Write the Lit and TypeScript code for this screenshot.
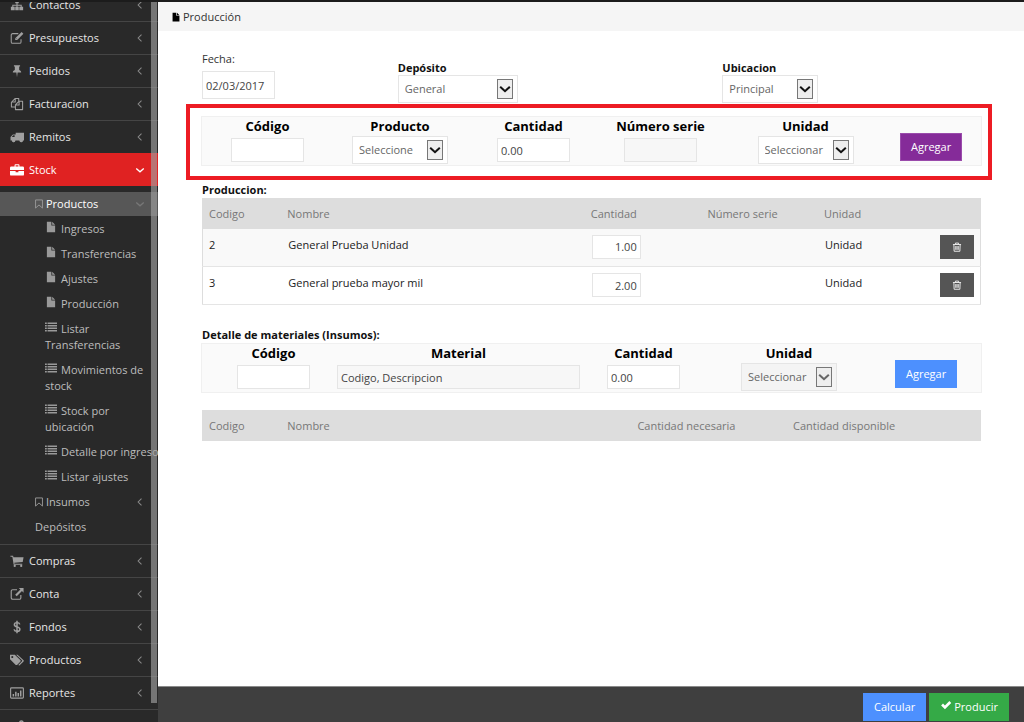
import { LitElement, html, css, svg } from "lit";
import { customElement, property } from "lit/decorators.js";

const icons: Record<string, unknown> = {
  sitemap: svg`<path d="M6 2h4v4H8.6v1.6H13.4V10H15v4h-4.4v-4h1.6V8.8H8.6V10H10v4H6v-4h1.4V8.8H3.8V10H5.4v4H1v-4h1.6V7.6h4.8V6H6z" fill="currentColor"/>`,
  edit: svg`<path d="M12.6 9.5v3a1.6 1.6 0 0 1-1.6 1.6H3a1.6 1.6 0 0 1-1.6-1.6V4.6A1.6 1.6 0 0 1 3 3h6.5" fill="none" stroke="currentColor" stroke-width="1.2"/><path d="M13.3 1.2l2 2-7 7H6V8.200z" fill="currentColor"/><path d="M7.2 8.5l.9.9" stroke="#292929" stroke-width=".8"/>`,
  pin: svg`<path d="M4.500 1.500h7v1.400h-1v4c1.500.6 2.300 1.600 2.300 2.900H8.700L8 15l-.7-5.200H3.200c0-1.300.8-2.300 2.300-2.900v-4h-1z" fill="currentColor"/>`,
  copy: svg`<path d="M6 4.500V1.600h4v3.200M6 1.600L1.600 6v5.400h4.200M1.600 5.800H6V2M10.400 4.800h4v9.600H6.200V9l4.200-4.200v4.400H6.400" fill="none" stroke="currentColor" stroke-width="1.200" stroke-linejoin="round"/>`,
  truck: svg`<path d="M6.500 3H16v9h-1.200a2 2 0 0 1-4 0H6.200a2 2 0 0 1-4 0H.6V8l2.700-3h3.200z" fill="currentColor"/><path d="M2 8l1.800-2h1.500v2z" fill="#292929"/><circle cx="4.200" cy="12.200" r="1.700" fill="currentColor"/><circle cx="12.800" cy="12.200" r="1.700" fill="currentColor"/>`,
  briefcase: svg`<path d="M5.200 4V2.500q0-1 1-1h3.600q1 0 1 1V4h3.700q1.500 0 1.500 1.500V8H0V5.500Q0 4 1.500 4zM6.400 4h3.200V2.700H6.400zM0 9h6.400v1.600h3.200V9H16v4q0 1.400-1.500 1.400h-13Q0 14.400 0 13z" fill="currentColor"/>`,
  cart: svg`<path d="M.5 2h3l.5 1.600h11.500l-1 5.500-9.600 1 .2 1H14v1.200H4.200L2.700 3.200H.5z" fill="currentColor"/><circle cx="5.400" cy="13.600" r="1.300" fill="currentColor"/><circle cx="12.800" cy="13.600" r="1.300" fill="currentColor"/>`,
  external: svg`<path d="M12.400 9v3.400a1.600 1.600 0 0 1-1.600 1.600H3a1.600 1.600 0 0 1-1.600-1.600V4.800A1.600 1.600 0 0 1 3 3.200h5" fill="none" stroke="currentColor" stroke-width="1.300"/><path d="M10 1h5.500v5.500l-1.800-1.800-6 6-1.800-1.800 6-6z" fill="currentColor"/>`,
  dollar: svg`<path d="M11.200 5C10.800 3.600 9.600 3 8 3 6.200 3 5 4 5 5.300 5 8.700 11.300 7 11.300 10.500 11.300 12 10 13 8 13c-1.800 0-3-.8-3.400-2.300M8 .8V15.200" fill="none" stroke="currentColor" stroke-width="1.700"/>`,
  tags: svg`<path d="M0 2h5.500l6.500 6.200q.6.700 0 1.400l-4 4q-.7.500-1.400 0L0 7.200zM2.600 3.300a1.200 1.200 0 1 0 .01 0z" fill="currentColor" fill-rule="evenodd"/><path d="M7 2h1.700l6.800 6.300q.6.600 0 1.300L11 14q-.8.500-1.500-.2l4.200-4.300q.5-.6 0-1.200z" fill="currentColor"/>`,
  chart: svg`<rect x=".7" y="2.200" width="14.600" height="11.600" rx="1" fill="none" stroke="currentColor" stroke-width="1.300"/><path d="M3 9h1.700v3H3zM5.800 6.500h1.700V12H5.800zM8.600 8h1.700v4H8.600zM11.400 5h1.700v7h-1.700z" fill="currentColor"/>`,
  cogs: svg`<circle cx="6" cy="9" r="3.600" fill="none" stroke="currentColor" stroke-width="2.800" stroke-dasharray="2.100 .7"/><circle cx="13" cy="4" r="1.800" fill="none" stroke="currentColor" stroke-width="1.800"/><circle cx="13" cy="13" r="1.800" fill="none" stroke="currentColor" stroke-width="1.800"/>`,
  file: svg`<path d="M2.500 1h6v5h5v9h-11zM9.600 1l3.900 4H9.600z" fill="currentColor"/>`,
  list: svg`<path d="M0 2h2.400v2H0zM3.400 2H16v2H3.400zM0 5.300h2.400v2H0zM3.400 5.300H16v2H3.400zM0 8.600h2.400v2H0zM3.400 8.600H16v2H3.400zM0 11.900h2.400v2H0zM3.400 11.900H16v2H3.400z" fill="currentColor"/>`,
  bookmark: svg`<path d="M2.500 1.500h11V14.500L8 9.500l-5.500 5z" fill="none" stroke="currentColor" stroke-width="1.500"/>`,
  left: svg`<path d="M10 3.500L5.500 8l4.500 4.500" fill="none" stroke="currentColor" stroke-width="1.400"/>`,
  down: svg`<path d="M3 6l5 4.500L13 6" fill="none" stroke="currentColor" stroke-width="1.800"/>`,
  arrow: svg`<path d="M2.500 5.500L8 10.500l5.500-5" fill="none" stroke="currentColor" stroke-width="2.400"/>`,
  trash: svg`<path d="M1.500 4h13M5.500 4V1.700h5V4M3 4.500l.4 10.300h9.200L13 4.500M6 6.500v6M8 6.500v6M10 6.500v6" fill="none" stroke="currentColor" stroke-width="1.500"/>`,
  check: svg`<path d="M1.500 8.500L4 6l2.600 2.600L12.500 2.800 15 5.300l-8.400 8.300z" fill="currentColor"/>`,
};

@customElement("ui-icon")
class UiIcon extends LitElement {
  @property() name = "";
  static styles = css`
    :host { display: inline-block; width: 14px; height: 14px; flex: none; }
    svg { display: block; width: 100%; height: 100%; }
  `;
  render() {
    return html`<svg viewBox="0 0 16 16" aria-hidden="true">${icons[this.name]}</svg>`;
  }
}

interface Item { icon: string; text: string; }

const before: Item[] = [
  { icon: "sitemap", text: "Contactos" },
  { icon: "edit", text: "Presupuestos" },
  { icon: "pin", text: "Pedidos" },
  { icon: "copy", text: "Facturacion" },
  { icon: "truck", text: "Remitos" },
];
const after: Item[] = [
  { icon: "cart", text: "Compras" },
  { icon: "external", text: "Conta" },
  { icon: "dollar", text: "Fondos" },
  { icon: "tags", text: "Productos" },
  { icon: "chart", text: "Reportes" },
  { icon: "cogs", text: "Configuracion" },
];
const leaves: { icon: string; lines: string[] }[] = [
  { icon: "file", lines: ["Ingresos"] },
  { icon: "file", lines: ["Transferencias"] },
  { icon: "file", lines: ["Ajustes"] },
  { icon: "file", lines: ["Producción"] },
  { icon: "list", lines: ["Listar", "Transferencias"] },
  { icon: "list", lines: ["Movimientos de", "stock"] },
  { icon: "list", lines: ["Stock por", "ubicación"] },
  { icon: "list", lines: ["Detalle por ingreso"] },
  { icon: "list", lines: ["Listar ajustes"] },
];

@customElement("side-menu")
class SideMenu extends LitElement {
  static styles = css`
    :host { display: block; position: relative; overflow: hidden; background: #292929; }
    ul { list-style: none; margin: 0; padding: 0; }
    .menu { margin-top: -14px; }
    a { color: inherit; text-decoration: none; }
    .top { display: flex; align-items: center; height: 32px; padding: 0 12px 0 10px; gap: 5px; border-top: 1px solid #454545; color: #e6e6e6; }
    .top ui-icon { color: #a0a0a0; }
    .label { flex: 1; }
    .top .chev, .mid .chev { width: 12px; height: 12px; color: #8a8a8a; }
    .open { background: #e02222; border-color: #e02222; color: #fff; }
    .open ui-icon, .open .chev { color: #fff; }
    .sub { padding: 6px 0 5px; color: #bdbdbd; line-height: 16px; }
    .mid { display: flex; align-items: center; height: 25px; padding: 0 12px 0 34px; gap: 2px; }
    .mid ui-icon { width: 10px; height: 12px; color: #999; }
    .mid.plain { padding-left: 35px; }
    .mid.active { height: 24px; background: #575757; color: #fff; }
    .mid.active .chev { color: #777; }
    .leaf { display: block; padding: 5px 0 4px 45px; white-space: nowrap; }
    .leaf ui-icon { width: 12px; height: 12px; margin-right: 4px; color: #999; }
    .thumb { position: absolute; top: 0; right: 1px; width: 6px; height: calc(100% - 19px); background: rgba(161, 161, 161, 0.64); }
  `;
  private row(i: Item) {
    return html`<li><a class="top" href="#"><ui-icon name=${i.icon}></ui-icon><span class="label">${i.text}</span><ui-icon class="chev" name="left"></ui-icon></a></li>`;
  }
  render() {
    return html`
      <nav>
        <ul class="menu">
          ${before.map((i) => this.row(i))}
          <li>
            <a class="top open" href="#"><ui-icon name="briefcase"></ui-icon><span class="label">Stock</span><ui-icon class="chev" name="down"></ui-icon></a>
            <ul class="sub">
              <li>
                <a class="mid active" href="#"><ui-icon name="bookmark"></ui-icon><span class="label">Productos</span><ui-icon class="chev" name="down"></ui-icon></a>
                <ul>
                  ${leaves.map((l) => html`<li><a class="leaf" href="#"><ui-icon name=${l.icon}></ui-icon>${l.lines.map((t, n) => (n ? html`<br />${t}` : t))}</a></li>`)}
                </ul>
              </li>
              <li><a class="mid" href="#"><ui-icon name="bookmark"></ui-icon><span class="label">Insumos</span><ui-icon class="chev" name="left"></ui-icon></a></li>
              <li><a class="mid plain" href="#">Depósitos</a></li>
            </ul>
          </li>
          ${after.map((i) => this.row(i))}
        </ul>
      </nav>
      <div class="thumb"></div>
    `;
  }
}

@customElement("app-root")
class AppRoot extends LitElement {
  static styles = css`
    :host { display: grid; grid-template: 2px minmax(0, 1fr) / 158px minmax(0, 1fr); height: 100vh; overflow: hidden; background: #fff; color: #333; font: 11px/16px "Open Sans", "Noto Sans", sans-serif; }
    * { box-sizing: border-box; }
    .strip { grid-column: 1 / -1; background: #1c1c1c; }
    .page { display: flex; flex-direction: column; min-width: 0; }
    .crumb { display: flex; align-items: center; gap: 2px; height: 29px; padding: 0 13px; background: #f5f5f5; }
    .crumb ui-icon { width: 10px; height: 10px; color: #000; }
    main { flex: 1; min-height: 0; padding: 20px 42px 0 43px; }
    label { display: block; }
    input, select, button { font: inherit; margin: 0; border-radius: 0; }
    input { width: 73px; height: 24px; padding: 0 3px; border: 1px solid #e5e5e5; background: #fff; color: #444; }
    input::placeholder { color: #444; opacity: 1; }
    input:disabled { background: #f7f7f7; }
    .pick { display: inline-block; position: relative; width: 96px; height: 28px; }
    .pick.wide { width: 120px; }
    select { display: block; appearance: none; width: 100%; height: 28px; padding: 0 24px 0 6px; border: 1px solid #e5e5e5; background: #fff; color: #666; opacity: 1; }
    select:disabled { background: #f4f4f4; }
    .pick ui-icon { position: absolute; top: 4px; right: 5px; width: 16px; height: 20px; border: 1px solid #777; background: #eee; color: #111; pointer-events: none; }
    .pick select:disabled + ui-icon { color: #666; }
    .heads { display: grid; grid-template-columns: 196fr 325fr 259fr; align-items: end; padding: 0 1px; height: 53px; }
    .heads > :not(.date) { padding-bottom: 1px; }
    .small { font-weight: 700; color: #111; line-height: 14px; }
    .date { align-self: start; }
    .date input { height: 28px; margin-top: 4px; }
    .mark { margin: 0 -10px 0 -15px; padding: 8px 6px 10px 11px; border: 4px solid #ed1c24; }
    .panel { display: grid; height: 50px; border: 1px solid #f0f0f0; background: #fafafa; text-align: center; }
    .add { grid-template-columns: 131fr 134fr 133fr 121fr 169fr 91fr; }
    .supply { grid-template-columns: 123fr 267fr 103fr 188fr 98fr; }
    .supply .first { padding-left: 20px; }
    .cell > label { color: #000; font-size: 13px; font-weight: 700; line-height: 19px; }
    .control { display: flex; align-items: center; justify-content: center; height: 28px; }
    .control .long { width: 91%; }
    .act { padding: 16px 0 0 10px; text-align: left; }
    .supply .act { padding-left: 12px; }
    .btn { height: 28px; padding: 0 10px; border: 1px solid #4d90fe; background: #4d90fe; color: #fff; }
    .purple { background: #852b99; border-color: #9a4bab; }
    .green { background: #35aa47; border-color: #35aa47; }
    .btn ui-icon { width: 12px; height: 12px; margin-right: 2px; }
    h2 { margin: 3px 1px 1px; line-height: 14px; font-size: 11px; font-weight: 700; color: #111; }
    .second { margin-top: 23px; }
    .tbl { padding: 0 1px; }
    table { width: 100%; border-collapse: collapse; table-layout: fixed; border: 1px solid #ddd; }
    th { height: 30px; padding: 0 7px; background: #ddd; color: #777; font-weight: 400; text-align: left; }
    td { height: 38px; padding: 6px 8px; border-bottom: 1px solid #e5e5e5; vertical-align: top; line-height: 20px; color: #222; }
    th:first-child, td:first-child { padding-left: 6px; }
    tbody tr:first-child { background: #f9f9f9; }
    td input { display: block; width: 49px; text-align: right; }
    .trash { display: flex; align-items: center; justify-content: center; width: 34px; height: 24px; margin-left: auto; padding: 0; border: 0; background: #555; color: #eee; }
    .trash ui-icon { width: 10px; height: 10px; }
    td.end { padding-right: 6px; }
    .c1 { width: 10%; } .c2 { width: 39%; } .c3 { width: 15%; } .c4 { width: 15%; }
    .m2 { width: 45%; } .m3 { width: 20%; }
    .needs { margin-top: 17px; }
    footer { display: flex; gap: 3px; justify-content: flex-end; height: 36px; padding: 6px 15px 0; background: #3f3f3f; border-top: 1px solid #8a8a8a; }
  `;
  private pick(id: string, text: string, wide = false, off = false) {
    return html`<span class="pick ${wide ? "wide" : ""}"><select id=${id} ?disabled=${off}><option>${text}</option></select><ui-icon name="arrow"></ui-icon></span>`;
  }
  private line(code: string, name: string, qty: string) {
    return html`<tr>
      <td>${code}</td><td>${name}</td>
      <td><input type="text" aria-label="Cantidad" .value=${qty} /></td>
      <td></td><td>Unidad</td>
      <td class="end"><button class="trash" type="button" aria-label="Eliminar"><ui-icon name="trash"></ui-icon></button></td>
    </tr>`;
  }
  render() {
    return html`
      <div class="strip"></div>
      <side-menu></side-menu>
      <div class="page">
        <header class="crumb"><ui-icon name="file"></ui-icon><span>Producción</span></header>
        <main>
          <div class="heads">
            <div class="date"><label for="fecha">Fecha:</label><input id="fecha" type="text" value="02/03/2017" /></div>
            <div><label class="small" for="deposito">Depósito</label>${this.pick("deposito", "General", true)}</div>
            <div><label class="small" for="ubicacion">Ubicacion</label>${this.pick("ubicacion", "Principal")}</div>
          </div>
          <div class="mark">
            <div class="panel add">
              <div class="cell"><label for="codigo">Código</label><div class="control"><input id="codigo" type="text" /></div></div>
              <div class="cell"><label for="producto">Producto</label><div class="control">${this.pick("producto", "Seleccione")}</div></div>
              <div class="cell"><label for="cantidad">Cantidad</label><div class="control"><input id="cantidad" type="text" value="0.00" /></div></div>
              <div class="cell"><label for="serie">Número serie</label><div class="control"><input id="serie" type="text" disabled /></div></div>
              <div class="cell"><label for="unidad">Unidad</label><div class="control">${this.pick("unidad", "Seleccionar")}</div></div>
              <div class="act"><button class="btn purple" type="button">Agregar</button></div>
            </div>
          </div>
          <h2>Produccion:</h2>
          <div class="tbl">
            <table>
              <colgroup><col class="c1" /><col class="c2" /><col class="c3" /><col class="c4" /><col /><col class="c1" /></colgroup>
              <thead><tr><th>Codigo</th><th>Nombre</th><th>Cantidad</th><th>Número serie</th><th>Unidad</th><th></th></tr></thead>
              <tbody>
                ${this.line("2", "General Prueba Unidad", "1.00")}
                ${this.line("3", "General prueba mayor mil", "2.00")}
              </tbody>
            </table>
          </div>
          <h2 class="second">Detalle de materiales (Insumos):</h2>
          <div class="panel supply">
            <div class="cell first"><label for="mcodigo">Código</label><div class="control"><input id="mcodigo" type="text" /></div></div>
            <div class="cell"><label for="material">Material</label><div class="control"><input class="long" id="material" type="text" placeholder="Codigo, Descripcion" disabled /></div></div>
            <div class="cell"><label for="mcantidad">Cantidad</label><div class="control"><input id="mcantidad" type="text" value="0.00" /></div></div>
            <div class="cell"><label for="munidad">Unidad</label><div class="control">${this.pick("munidad", "Seleccionar", false, true)}</div></div>
            <div class="act"><button class="btn" type="button">Agregar</button></div>
          </div>
          <div class="tbl needs">
            <table>
              <colgroup><col class="c1" /><col class="m2" /><col class="m3" /><col /></colgroup>
              <thead><tr><th>Codigo</th><th>Nombre</th><th>Cantidad necesaria</th><th>Cantidad disponible</th></tr></thead>
            </table>
          </div>
        </main>
        <footer>
          <button class="btn" type="button">Calcular</button>
          <button class="btn green" type="button"><ui-icon name="check"></ui-icon>Producir</button>
        </footer>
      </div>
    `;
  }
}
